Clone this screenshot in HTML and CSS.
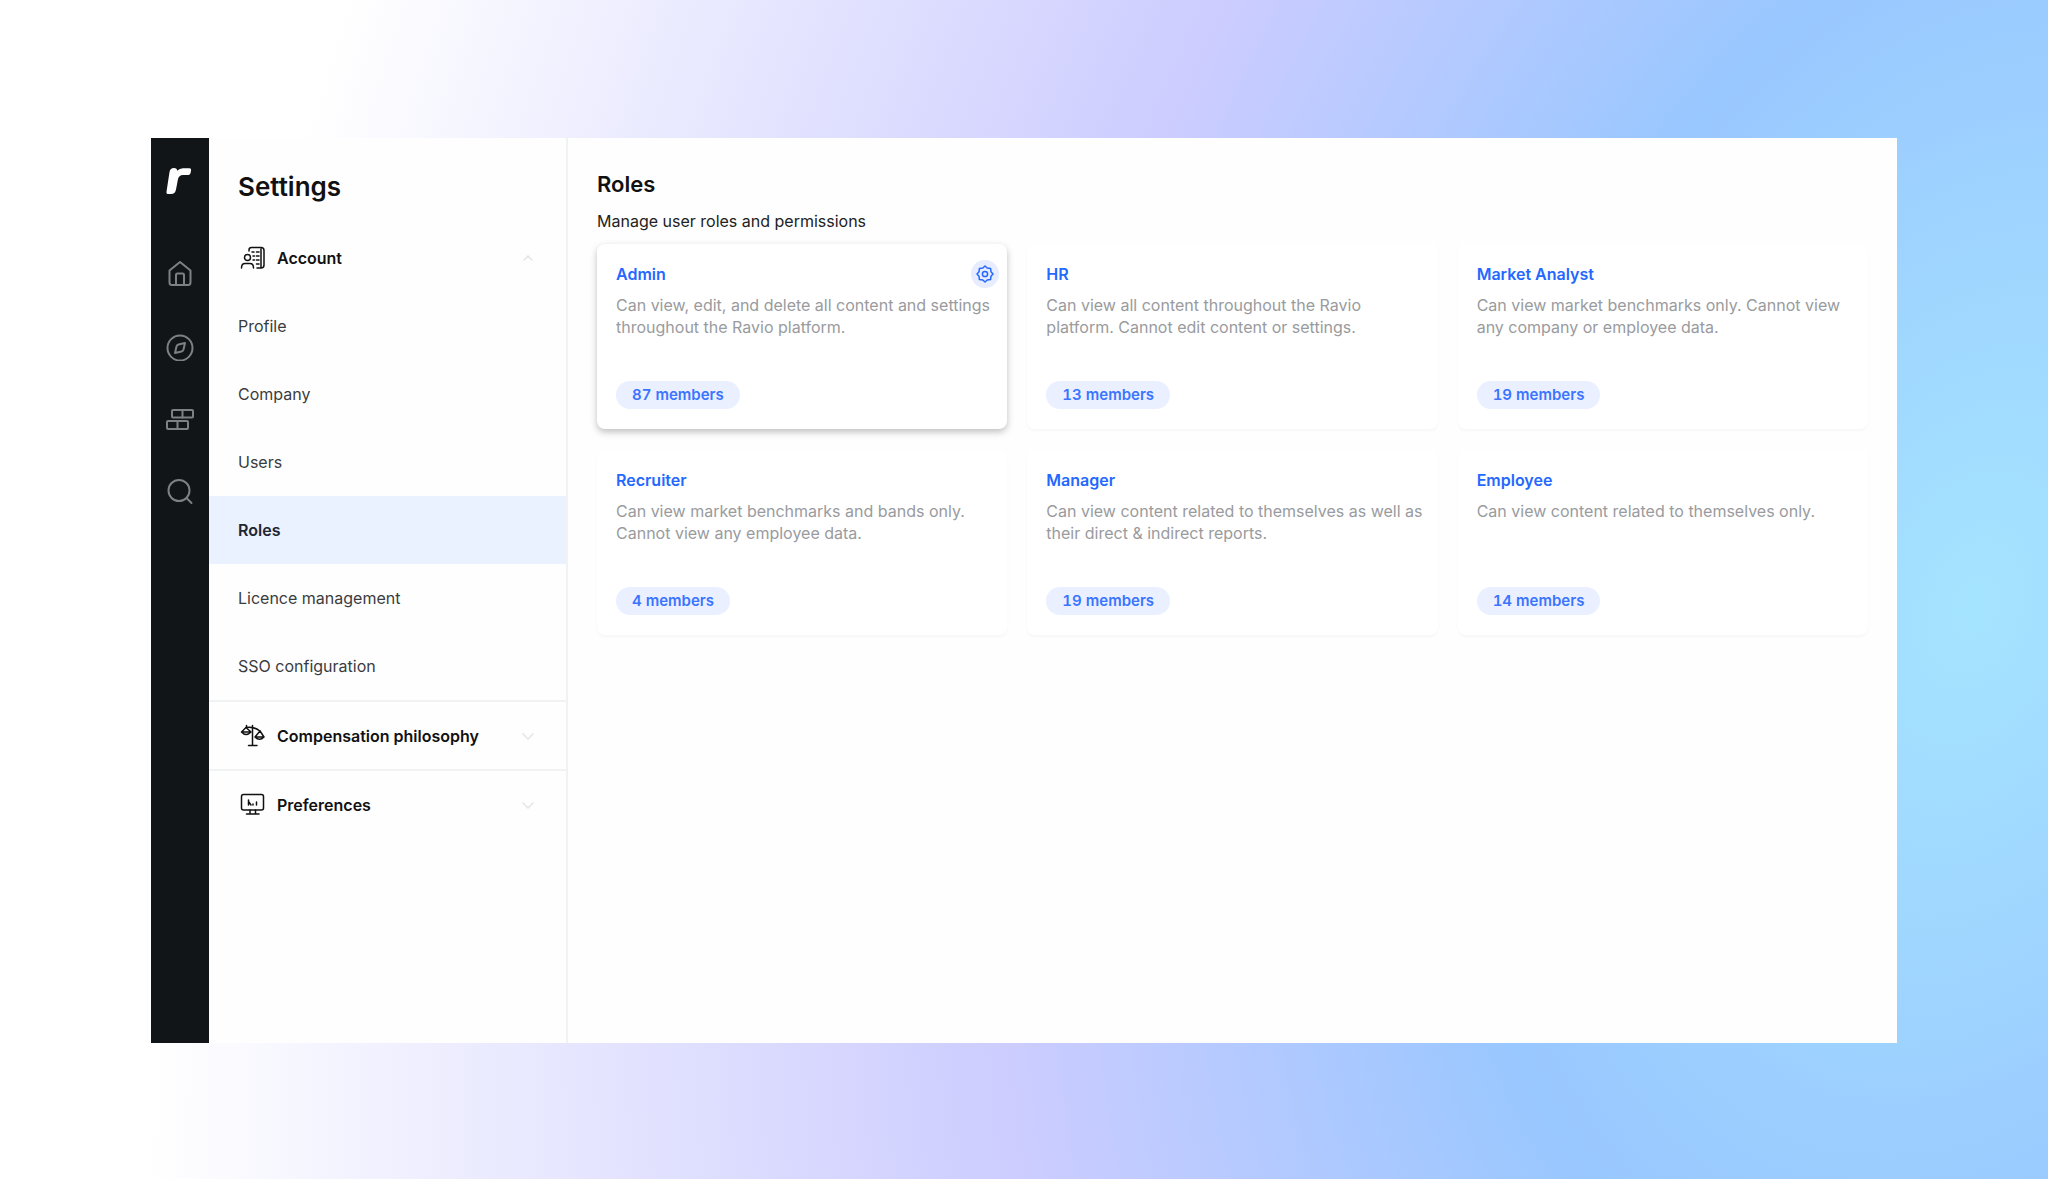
FILE: index.html
```html
<!DOCTYPE html>
<html lang="en">
<head>
    <meta charset="UTF-8">
    <meta name="viewport" content="width=device-width, initial-scale=1.0">
    <title>Settings - Roles</title>
    <link rel="stylesheet" href="styles.css">
</head>
<body>
    <svg class="backdrop" viewBox="0 0 2048 1179" preserveAspectRatio="none" aria-hidden="true">
        <defs>
            <radialGradient id="glow" gradientUnits="userSpaceOnUse" cx="0" cy="0" r="1" gradientTransform="translate(1975 607) rotate(17) scale(1736 2606)">
                <stop offset="0" stop-color="#a5e4ff"/>
                <stop offset="0.278" stop-color="#99c7ff"/>
                <stop offset="0.530" stop-color="#ccccff"/>
                <stop offset="1" stop-color="#fff"/>
            </radialGradient>
        </defs>
        <rect width="2048" height="1179" fill="url(#glow)" stroke="none"/>
    </svg>

    <div class="app">
        <nav class="rail" aria-label="Main">
            <a class="rail-logo" href="#" aria-label="Ravio">
                <svg width="28" height="30" viewBox="0 0 28 30">
                    <path d="M3.500 6Q4.200 2 8 2Q11 2 11.200 4.800Q13.500 2.200 17 2.200H23.500Q25.500 2.200 25.100 4.200L24.500 7.200Q24.100 9 22.200 9H17Q12.800 9 11.900 13.500L10 23.500Q9.200 28 5 28H2.500Q0.100 28 0.500 25.700Z"/>
                </svg>
            </a>
            <a class="rail-link" href="#" aria-label="Home">
                <svg width="28" height="28" viewBox="0 0 28 28">
                    <path d="M3.500 9.500L14 1L24.500 9.500V21.500Q24.500 24 22 24H6Q3.500 24 3.500 21.500Z"/>
                    <path d="M10 24V14Q10 12.500 11.500 12.500H16.500Q18 12.500 18 14V24"/>
                </svg>
            </a>
            <a class="rail-link" href="#" aria-label="Explore">
                <svg width="28" height="28" viewBox="0 0 28 28">
                    <circle cx="14" cy="15" r="12.500"/>
                    <path d="M19 10L17.500 16.500Q17 18 15.500 18.500L9 20L10.500 13.500Q11 12 12.500 11.500Z"/>
                </svg>
            </a>
            <a class="rail-link" href="#" aria-label="Bands">
                <svg width="28" height="28" viewBox="0 0 28 28">
                    <rect x="6" y="5" width="21" height="7.500" rx="1"/>
                    <rect x="1" y="16" width="21" height="8" rx="1"/>
                    <path d="M16.500 5V12.500M11.500 16V24"/>
                </svg>
            </a>
            <a class="rail-link" href="#" aria-label="Search">
                <svg width="28" height="28" viewBox="0 0 28 28">
                    <circle cx="13" cy="13.500" r="10.500"/>
                    <path d="M20.500 21L25.500 26"/>
                </svg>
            </a>
        </nav>

        <aside class="sidebar">
            <h1>Settings</h1>
            <button class="group" aria-expanded="true">
                <svg class="group-icon" width="26" height="26" viewBox="0 0 26 26">
                    <path d="M9 6V5Q9 2.500 11.500 2.500H21Q24 2.500 24 5.500V20Q24 23 21 23H17M21 4V22"/>
                    <circle cx="7.500" cy="12.500" r="3"/>
                    <path d="M1.500 23Q1.500 18.500 5 18.500H10Q13.500 18.500 13.500 23"/>
                    <path d="M12 7H14M16.500 7H19M13 11H14.500M16.500 11H19M13 15H14.500M16.500 15H19M16.500 19H19"/>
                </svg>
                <span>Account</span>
                <svg class="chevron" width="12" height="12" viewBox="0 0 12 12"><path d="M2 8L6 4L10 8"/></svg>
            </button>
            <a class="item" href="#">Profile</a>
            <a class="item" href="#">Company</a>
            <a class="item" href="#">Users</a>
            <a class="item active" href="#">Roles</a>
            <a class="item" href="#">Licence management</a>
            <a class="item" href="#">SSO configuration</a>
            <button class="group bordered" aria-expanded="false">
                <svg class="group-icon" width="26" height="26" viewBox="0 0 26 26">
                    <path d="M12.500 5V22M8.500 22.500H17M6 4.500Q13 3 20 8M6.500 2.500V4.500M12.500 2.500V5"/>
                    <path d="M6 4.500L1.500 9H11ZM1.500 9Q6 14 11 9M20 8L15 14H24ZM15 14Q19.500 18.500 24 14"/>
                </svg>
                <span>Compensation philosophy</span>
                <svg class="chevron" width="12" height="12" viewBox="0 0 12 12"><path d="M1 4L6 9L11 4"/></svg>
            </button>
            <button class="group bordered" aria-expanded="false">
                <svg class="group-icon" width="26" height="26" viewBox="0 0 26 26">
                    <rect x="1.500" y="2.500" width="22" height="15.500" rx="2"/>
                    <path d="M10 18V21.500M15.500 18V21.500M6.500 22H19M8.500 8V13M8.500 9.500L11 13M13 12V13M16.500 10V13"/>
                </svg>
                <span>Preferences</span>
                <svg class="chevron" width="12" height="12" viewBox="0 0 12 12"><path d="M1 4L6 9L11 4"/></svg>
            </button>
        </aside>

        <main class="content">
            <h2>Roles</h2>
            <p class="intro">Manage user roles and permissions</p>
            <div class="cards">
                <section class="card selected">
                    <div class="card-head">
                        <h3>Admin</h3>
                        <button class="gear" aria-label="Edit role">
                            <svg width="18" height="18" viewBox="0 0 18 18">
                                <path d="M9 1L11.200 3L14.600 3.400L15 6.800L17 9L15 11.200L14.600 14.600L11.200 15L9 17L6.800 15L3.400 14.600L3 11.200L1 9L3 6.800L3.400 3.400L6.800 3Z"/>
                                <circle cx="9" cy="9" r="2.600"/>
                            </svg>
                        </button>
                    </div>
                    <p>Can view, edit, and delete all content and settings throughout the Ravio platform.</p>
                    <a class="members" href="#">87 members</a>
                </section>
                <section class="card">
                    <div class="card-head"><h3>HR</h3></div>
                    <p>Can view all content throughout the Ravio platform. Cannot edit content or settings.</p>
                    <a class="members" href="#">13 members</a>
                </section>
                <section class="card">
                    <div class="card-head"><h3>Market Analyst</h3></div>
                    <p>Can view market benchmarks only. Cannot view any company or employee data.</p>
                    <a class="members" href="#">19 members</a>
                </section>
                <section class="card">
                    <div class="card-head"><h3>Recruiter</h3></div>
                    <p>Can view market benchmarks and bands only. Cannot view any employee data.</p>
                    <a class="members" href="#">4 members</a>
                </section>
                <section class="card">
                    <div class="card-head"><h3>Manager</h3></div>
                    <p>Can view content related to themselves as well as their direct &amp; indirect reports.</p>
                    <a class="members" href="#">19 members</a>
                </section>
                <section class="card">
                    <div class="card-head"><h3>Employee</h3></div>
                    <p>Can view content related to themselves only.</p>
                    <a class="members" href="#">14 members</a>
                </section>
            </div>
        </main>
    </div>
</body>
</html>
```
FILE: styles.css
```css
* {
    box-sizing: border-box;
}

body {
    position: relative;
    display: flex;
    min-height: 100vh;
    margin: 0;
    padding: 138px 151px 136px;
    background-color: #fff;
    color: #111;
    font-family: Inter, "Liberation Sans", sans-serif;
    font-size: 16px;
}

h1, h2, h3, p {
    margin: 0;
}

button {
    border: 0;
    background: none;
    font: inherit;
    color: inherit;
    cursor: pointer;
}

a {
    color: inherit;
    text-decoration: none;
}

svg {
    display: block;
    flex: none;
    fill: none;
    stroke: currentColor;
    stroke-width: 1.5;
    stroke-linecap: round;
    stroke-linejoin: round;
}

/* Tilted glow coming from the right side */
.backdrop {
    position: absolute;
    z-index: -1;
    top: 0;
    left: 0;
    width: 100%;
    height: 100%;
}

.app {
    display: flex;
    flex: 1;
    background: #fefefe;
}

/* Dark icon bar */
.rail {
    display: flex;
    flex-direction: column;
    align-items: center;
    gap: 44px;
    width: 58px;
    padding-top: 28px;
    background: #111518;
    color: #7d8184;
}

.rail-logo {
    margin-bottom: 21px;
}

.rail-logo svg {
    fill: #fff;
    stroke: none;
}

.rail-link svg {
    stroke-width: 2;
}

/* Settings menu */
.sidebar {
    width: 359px;
    padding-top: 32px;
    border-right: 2px solid #f1f2f3;
}

.sidebar h1 {
    padding: 0 29px;
    margin-bottom: 20px;
    font-size: 26px;
    font-weight: 600;
    line-height: 34px;
}

.group,
.item {
    display: flex;
    align-items: center;
    width: 100%;
    height: 68px;
    padding: 0 29px;
}

.group {
    gap: 11px;
    padding-left: 31px;
    padding-right: 32px;
    font-weight: 600;
}

.group.bordered {
    height: 69px;
    border-top: 2px solid #f1f2f4;
}

.chevron {
    margin-left: auto;
    color: #e4e5e7;
}

.item {
    color: #3a3c3e;
}

.item.active {
    background: #eaf1ff;
    color: #22262e;
    font-weight: 600;
}

/* Roles */
.content {
    flex: 1;
    padding: 32px 29px;
}

.content h2 {
    font-size: 22px;
    font-weight: 600;
    line-height: 28px;
}

.intro {
    margin-top: 12px;
    color: #222;
    line-height: 22px;
}

.cards {
    display: grid;
    grid-template-columns: repeat(3, 1fr);
    gap: 21px 20px;
    margin-top: 12px;
}

.card {
    display: flex;
    flex-direction: column;
    align-items: flex-start;
    height: 185px;
    padding: 16px 8px 20px 19px;
    border-radius: 8px;
    background: #fff;
    box-shadow: 0 2px 3px rgba(0, 0, 0, 0.03);
}

.card.selected {
    box-shadow: 0 3px 7px rgba(0, 0, 0, 0.25);
}

.card-head {
    display: flex;
    align-items: center;
    justify-content: space-between;
    width: 100%;
    height: 28px;
}

.card h3 {
    color: #2468ff;
    font-size: 16px;
    font-weight: 600;
}

.gear {
    display: grid;
    place-items: center;
    width: 28px;
    height: 28px;
    padding: 0;
    border-radius: 50%;
    background: #e7edff;
    color: #2468ff;
}

.card p {
    margin-top: 6px;
    color: #999b9e;
    line-height: 22px;
}

.members {
    margin-top: auto;
    padding: 0 16px;
    border-radius: 14px;
    background: #eaf0ff;
    color: #3a74ff;
    font-size: 15px;
    font-weight: 600;
    font-variant-numeric: tabular-nums;
    line-height: 28px;
}
```
